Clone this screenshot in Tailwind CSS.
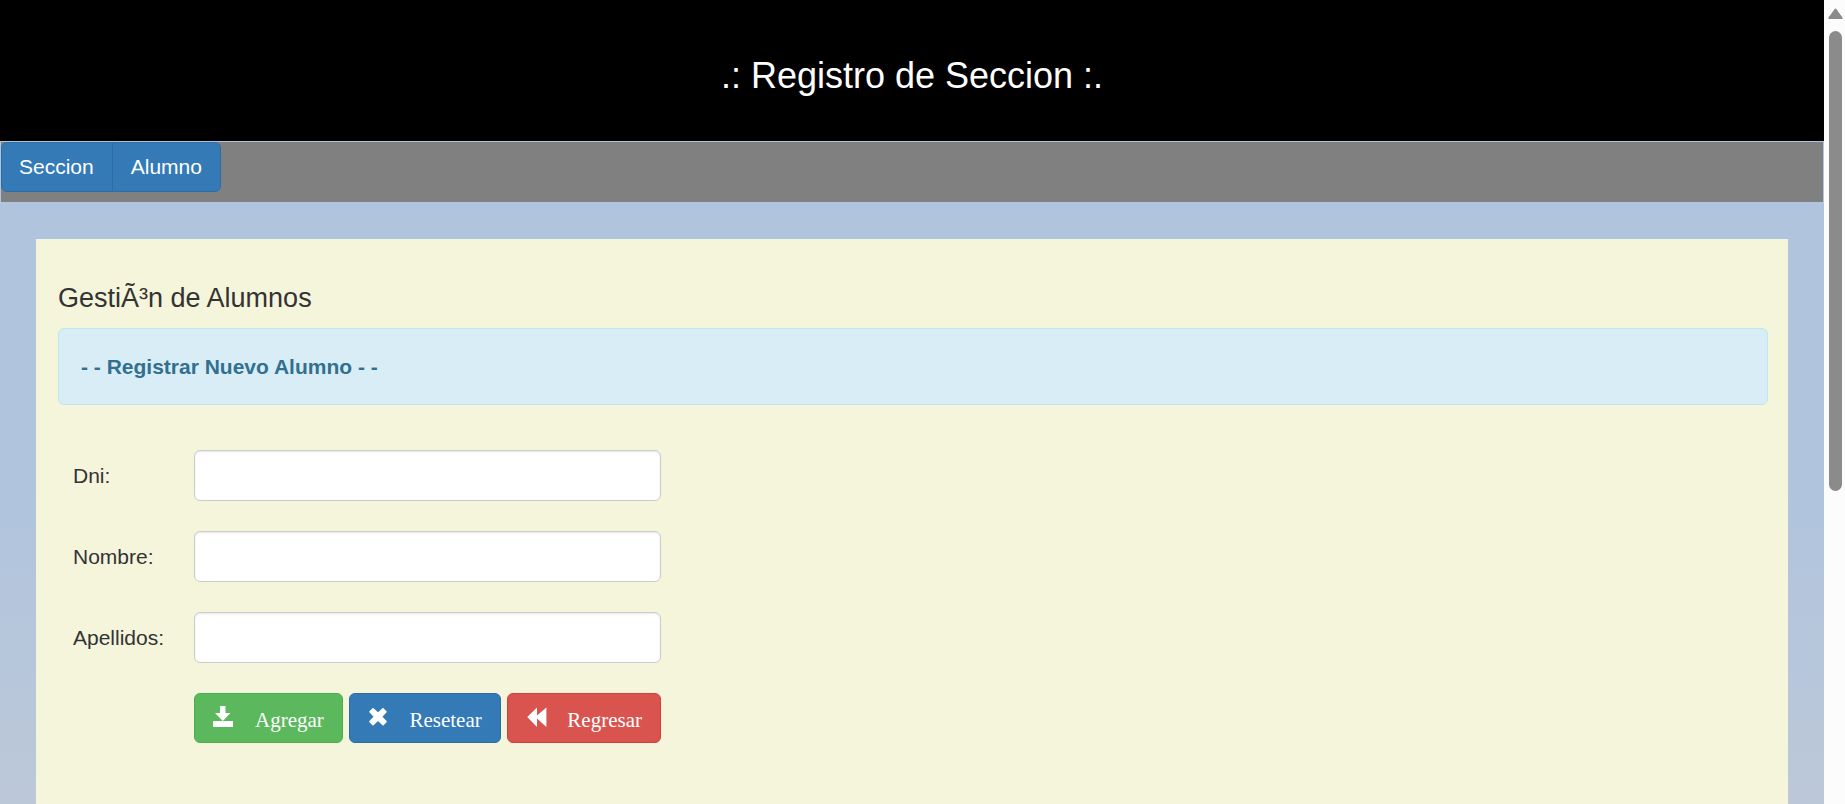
<!DOCTYPE html>
<html lang="es">
<head>
<meta charset="utf-8">
<title>Registro de Seccion</title>
<script src="https://cdn.jsdelivr.net/npm/@tailwindcss/browser@4"></script>
</head>
<body class="flex h-screen overflow-hidden font-['Liberation_Sans',Arial,sans-serif] text-[21px] leading-[30px] text-[#333333]">
  <div class="flex min-w-0 flex-1 flex-col bg-linear-to-b from-[#b0c4de] from-60% to-[#bcc8d8] to-100%">
    <header class="bg-black pt-14 pb-[45px] text-center text-white">
      <h1 class="text-[36px] leading-10">.: Registro de Seccion :.</h1>
    </header>
    <nav class="mx-px mt-px flex bg-[#808080] pb-2.5">
      <a href="#seccion" class="rounded-l-md border border-[#2e6da4] bg-[#337ab7] py-[9px] pr-[18px] pl-[17px] text-white">Seccion</a>
      <a href="#alumno" class="-ml-px rounded-r-md border border-[#2e6da4] bg-[#337ab7] px-[18px] py-[9px] text-white">Alumno</a>
    </nav>
    <main class="mx-9 mt-[37px] flex-1 bg-[#f5f5dc] pt-11 pr-5 pl-[22px]">
      <h2 class="text-[27px] leading-[30px]">GestiÃ³n de Alumnos</h2>
      <div class="mt-[15px] rounded-md border border-[#bce8f1] bg-[#d9edf7] px-[22px] pt-[23px] pb-[22px] text-[#31708f]"><strong>- - Registrar Nuevo Alumno - -</strong></div>
      <form class="mt-[45px] ml-[15px] grid grid-cols-[121px_467px] items-center gap-y-[30px]">
        <label for="dni">Dni:</label>
        <input id="dni" type="text" class="h-[51px] rounded-md border border-[#cccccc] bg-white px-4 shadow-[inset_0_1px_2px_rgba(0,0,0,0.1)]">
        <label for="nombre">Nombre:</label>
        <input id="nombre" type="text" class="h-[51px] rounded-md border border-[#cccccc] bg-white px-4 shadow-[inset_0_1px_2px_rgba(0,0,0,0.1)]">
        <label for="apellidos">Apellidos:</label>
        <input id="apellidos" type="text" class="h-[51px] rounded-md border border-[#cccccc] bg-white px-4 shadow-[inset_0_1px_2px_rgba(0,0,0,0.1)]">
        <div class="col-start-2 flex justify-between font-['Liberation_Serif','Times_New_Roman',serif] text-white">
          <button type="submit" class="flex items-baseline gap-[21px] rounded-md border border-[#4cae4c] bg-[#5cb85c] px-[18px] pt-[11px] pb-[7px]">
            <svg class="size-[21px]" viewBox="0 0 21 21" fill="currentColor" aria-hidden="true"><path d="M7 0H12.5V7H17.5L9.8 15 2 7H7ZM0.5 15H19.5Q20 15 20 15.5V21H0V15.5Q0 15 .5 15Z"/></svg>
            Agregar
          </button>
          <button type="reset" class="flex items-baseline gap-5 rounded-md border border-[#2e6da4] bg-[#337ab7] px-[18px] pt-[11px] pb-[7px]">
            <svg class="size-[21px]" viewBox="0 0 21 21" fill="currentColor" stroke="currentColor" stroke-width="1.6" stroke-linejoin="round" aria-hidden="true"><path d="M5 2.8 10 7.4 15 2.8 18 5.8 13.4 10.7 18 15.6 15 18.6 10 14 5 18.6 2 15.6 6.6 10.7 2 5.8Z"/></svg>
            Resetear
          </button>
          <button type="button" class="flex items-baseline gap-5 rounded-md border border-[#d43f3a] bg-[#d9534f] px-[18px] pt-[11px] pb-[7px]">
            <svg class="size-[21px]" viewBox="0 0 21 21" fill="currentColor" aria-hidden="true"><path d="M1.2 11 11 1.4V9.6L20.4 1.4V21L11 12.4V21Z"/></svg>
            Regresar
          </button>
        </div>
      </form>
    </main>
  </div>
  <div class="flex w-[21px] flex-col items-center bg-[#fcfcfc] pt-2 pl-0.5" aria-hidden="true">
    <svg class="h-3 w-[15px] shrink-0" viewBox="0 0 15 12"><path d="M7.5 1.5 1.3 10H13.7Z" fill="#8b8b8b" stroke="#8b8b8b" stroke-width="2" stroke-linejoin="round"/></svg>
    <div class="mt-[11px] h-[460px] w-[13px] rounded-full bg-[#8b8b8b]"></div>
  </div>
</body>
</html>
